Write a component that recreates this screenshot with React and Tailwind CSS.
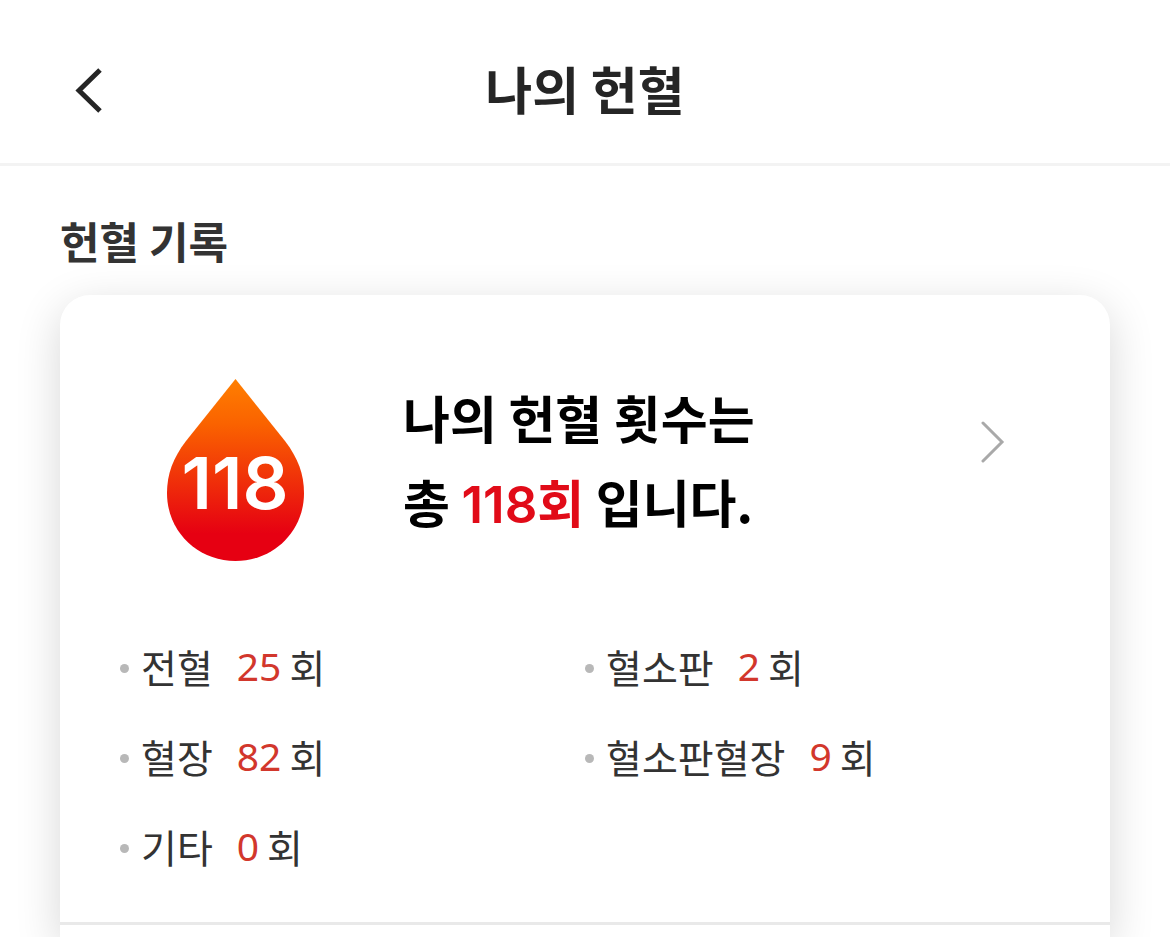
const donations = [
  { label: '전혈', count: 25 },
  { label: '혈소판', count: 2 },
  { label: '혈장', count: 82 },
  { label: '혈소판혈장', count: 9 },
  { label: '기타', count: 0 },
]

function BackIcon() {
  return (
    <svg width="28" height="46" viewBox="0 0 28 46" fill="none" stroke="#252525" strokeWidth="5">
      <path d="M25 2 L4 22.500 L25 43" />
    </svg>
  )
}

function ArrowIcon() {
  return (
    <svg width="26" height="42" viewBox="0 0 26 42" fill="none" stroke="#a9a9a9" strokeWidth="3" strokeLinecap="round">
      <path d="M3 2 L22 21 L3 40" />
    </svg>
  )
}

function BloodDrop({ count }) {
  return (
    <svg width="138" height="184" viewBox="0 0 138 184" className="shrink-0">
      <defs>
        <linearGradient id="drop" x1="0" y1="0" x2="0" y2="1">
          <stop offset="0" stopColor="#ff7f00" />
          <stop offset="0.25" stopColor="#fa6200" />
          <stop offset="0.85" stopColor="#e60012" />
          <stop offset="1" stopColor="#e60012" />
        </linearGradient>
      </defs>
      <path
        d="M68.500 0 L118 62 C131 79 137 95 137 114 C137 153 106 182 68.500 182 C31 182 0 153 0 114 C0 95 6 79 19 62 Z"
        fill="url(#drop)"
      />
      <text
        x="68"
        y="130"
        textAnchor="middle"
        fill="#fff"
        className="font-['Inter','Noto_Sans',sans-serif] text-[72px] font-semibold"
      >
        {count}
      </text>
    </svg>
  )
}

function DonationItem({ label, count }) {
  return (
    <li className="flex h-[90px] items-center text-[39px] leading-[60px] text-[#333]">
      <span className="mr-3 size-[9px] rounded-full bg-[#b8b8b8]" />
      <span className="pb-1">{label}</span>
      <span className="mr-2 ml-6 pb-1 font-['Noto_Sans',sans-serif] text-[#d2372c]">{count}</span>
      <span className="pb-1">회</span>
    </li>
  )
}

export default function App() {
  const total = donations.reduce((sum, d) => sum + d.count, 0)

  return (
    <div className="flex min-h-screen flex-col overflow-hidden bg-white font-['Noto_Sans_CJK_KR',sans-serif]">
      {/* 상단 바 */}
      <header className="grid grid-cols-[1fr_auto_1fr] items-center border-b-[3px] border-[#f3f3f3] px-[75px] pt-[18px]">
        <button type="button" aria-label="뒤로" className="justify-self-start">
          <BackIcon />
        </button>
        <h1 className="pb-[5px] text-[51px] leading-[140px] font-bold text-[#252525]">나의 헌혈</h1>
      </header>

      {/* 헌혈 기록 */}
      <main className="flex flex-1 flex-col px-[60px] pt-11">
        <h2 className="text-[43px] leading-[60px] font-bold text-[#333]">헌혈 기록</h2>

        <section className="mt-[25px] flex-1 rounded-t-[30px] bg-white shadow-[0_12px_45px_rgba(0,0,0,0.16)]">
          <a href="#history" className="flex pt-20 pr-[104px] pl-[107px] text-black">
            <span className="flex flex-1 items-center">
              <BloodDrop count={total} />
              <span className="ml-[98px] pb-5 text-[51px] leading-[84px] font-bold">
                나의 헌혈 횟수는
                <br />
                총{' '}
                <span className="text-[#e10b18]">
                  <span className="font-['Inter','Noto_Sans',sans-serif] font-semibold">{total}</span>회
                </span>{' '}
                입니다.
              </span>
            </span>
            <span className="pt-[46px]">
              <ArrowIcon />
            </span>
          </a>

          <ul className="grid grid-cols-2 px-[60px] pt-14 pb-[29px]">
            {donations.map((d) => (
              <DonationItem key={d.label} label={d.label} count={d.count} />
            ))}
          </ul>

          <hr className="border-t-[3px] border-[#e9e9e9]" />
        </section>
      </main>
    </div>
  )
}
